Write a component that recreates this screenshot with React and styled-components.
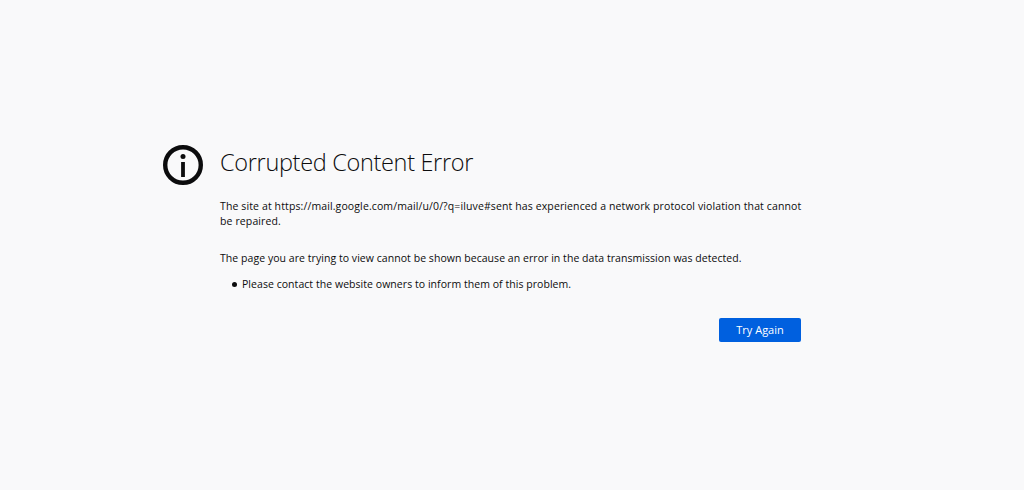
import React from "react";
import styled, { createGlobalStyle } from "styled-components";

const GlobalStyle = createGlobalStyle`
  html, body {
    margin: 0;
    height: 100%;
    background: #f9f9fa;
  }
  body {
    font-family: "Open Sans", "Noto Sans", sans-serif;
    color: #0c0c0d;
  }
`;

export default function App() {
  return (
    <>
      <GlobalStyle />
      <Page>
        <Container>
          <InfoIcon viewBox="0 0 40 40" aria-hidden="true">
            <circle cx="20" cy="20" r="17.8" fill="none" stroke="#0c0c0d" strokeWidth="4.4" />
            <circle cx="20" cy="11.4" r="2.5" fill="#0c0c0d" />
            <rect x="18.1" y="17" width="3.8" height="15" fill="#0c0c0d" />
          </InfoIcon>
          <Content>
            <Title>Corrupted Content Error</Title>
            <Intro>
              The site at https://mail.google.com/mail/u/0/?q=iluve#sent has experienced a network
              protocol violation that cannot be repaired.
            </Intro>
            <Message>
              The page you are trying to view cannot be shown because an error in the data
              transmission was detected.
            </Message>
            <Hints>
              <li>Please contact the website owners to inform them of this problem.</li>
            </Hints>
            <Actions>
              <TryAgain type="button">Try Again</TryAgain>
            </Actions>
          </Content>
        </Container>
      </Page>
    </>
  );
}

const Page = styled.main`
  box-sizing: border-box;
  height: 490px;
  padding: 143px 0 0 163px;
  overflow: hidden;
`;

const Container = styled.div`
  display: flex;
  align-items: flex-start;
  gap: 17px;
`;

const InfoIcon = styled.svg`
  flex: none;
  width: 40px;
  height: 40px;
  margin-top: 2px;
`;

const Content = styled.div`
  flex: none;
  width: 585px;
`;

const Title = styled.h1`
  margin: 0;
  height: 40px;
  font-size: 23.5px;
  line-height: 38px;
  font-weight: 300;
  letter-spacing: -0.32px;
  color: #0c0c0d;
`;

const Intro = styled.p`
  margin: 16px 0 0;
  font-size: 10.5px;
  line-height: 15px;
  letter-spacing: 0.12px;
`;

const Message = styled.p`
  margin: 21px 0 0;
  font-size: 10.5px;
  line-height: 16px;
  letter-spacing: 0.05px;
`;

const Hints = styled.ul`
  margin: 10px 0 0;
  padding: 0 0 0 12px;
  list-style: none;
  font-size: 10.5px;
  line-height: 16px;
  letter-spacing: 0.05px;

  li {
    display: flex;
    align-items: center;
    gap: 5px;
  }

  li::before {
    content: "";
    flex: none;
    width: 5px;
    height: 5px;
    border-radius: 50%;
    background: #0c0c0d;
  }
`;

const Actions = styled.div`
  display: flex;
  justify-content: flex-end;
  margin-top: 26px;
  padding-right: 4px;
`;

const TryAgain = styled.button`
  width: 82px;
  height: 24px;
  padding: 0 0 2px;
  border: 0;
  border-radius: 2px;
  background: #0060df;
  color: #fff;
  font-family: inherit;
  font-size: 11px;
`;
